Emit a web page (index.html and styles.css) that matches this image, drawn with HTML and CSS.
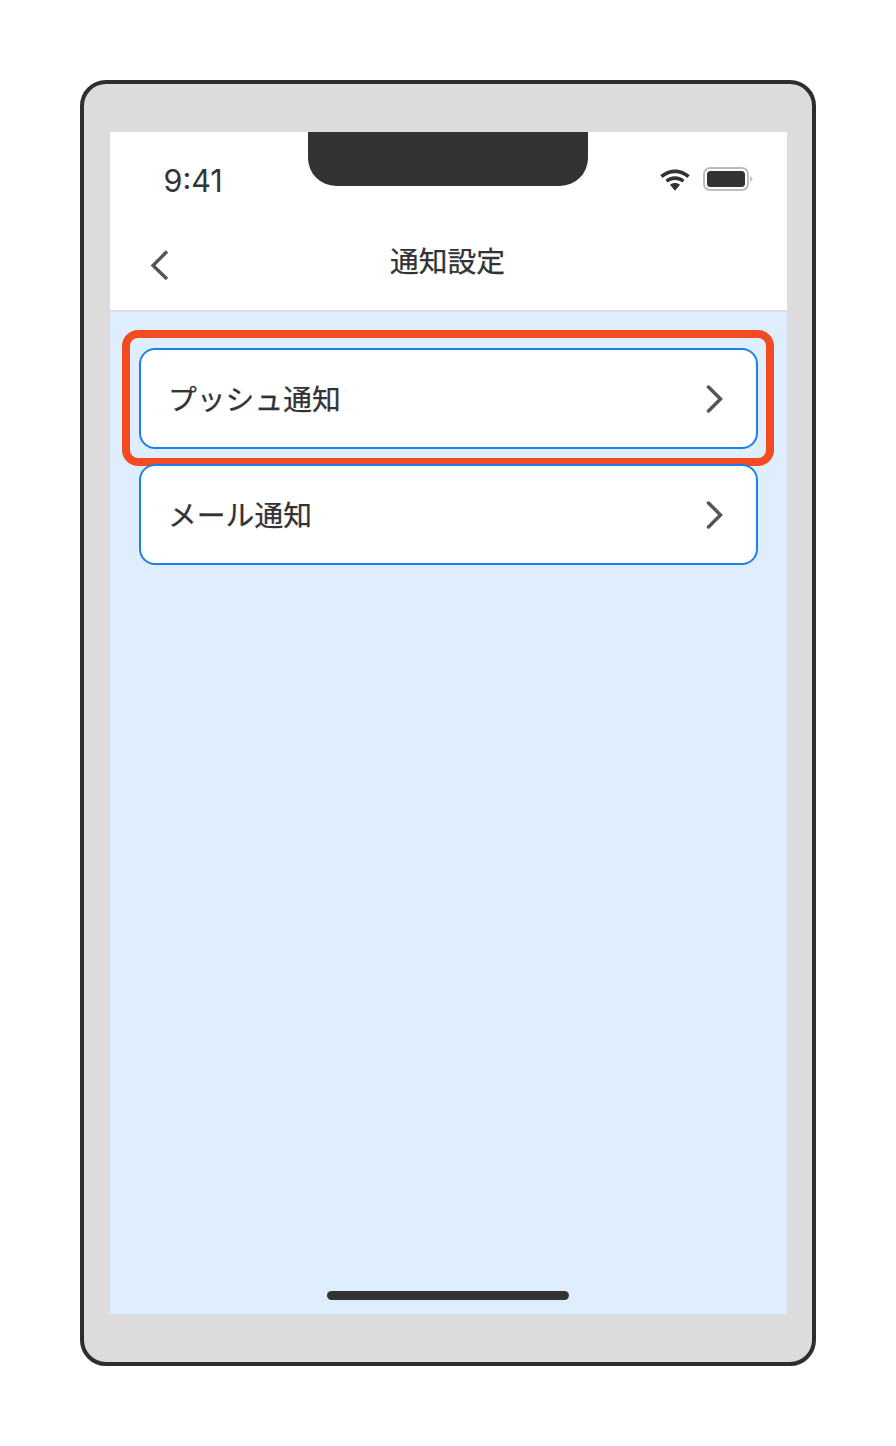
FILE: index.html
```html
<!DOCTYPE html>
<html lang="ja">
<head>
<meta charset="utf-8">
<title>通知設定</title>
<link rel="stylesheet" href="styles.css">
</head>
<body>
<div class="phone">
  <div class="screen">
    <div class="notch"></div>
    <div class="status">
      <span class="time">9:41</span>
      <div class="status-icons">
        <svg class="wifi" width="32" height="24" viewBox="0 0 32 24"><path fill="#333" d="M16 1.5C10 1.5 5.4 3.8 1.3 7.3L3.6 10C7.2 7 11.2 5.2 16 5.2S24.8 7 28.4 10L30.7 7.3C26.6 3.8 22 1.5 16 1.5ZM16 8.3C12.2 8.3 9.1 9.6 6.4 11.9L8.7 14.6C10.7 13 13 12 16 12S21.3 13 23.3 14.6L25.600 11.900C22.900 9.600 19.800 8.300 16 8.300ZM16 15C14.100 15 12.500 15.600 11 16.800L16 22.800 21 16.800C19.500 15.600 17.900 15 16 15Z"/></svg>
        <svg class="battery" width="50" height="26" viewBox="0 0 50 26"><rect x="1" y="1" width="44" height="22" rx="6" fill="#fff" stroke="#bdbdbd" stroke-width="2"/><rect x="4" y="4" width="38" height="16" rx="3.500" fill="#333"/><path fill="#c4c4c4" d="M47 9.500c1.500.3 2.500 1.200 2.500 2.500s-1 2.200-2.500 2.500Z"/></svg>
      </div>
    </div>
    <header class="nav">
      <svg class="back" width="22" height="32" viewBox="0 0 22 32"><path d="M18 2.500 4 16.500 18 30" fill="none" stroke="#555" stroke-width="3.400"/></svg>
      <h1 class="title">通知設定</h1>
    </header>
    <main class="content">
      <a class="row">
        <span class="row-label">プッシュ通知</span>
        <svg class="chev" width="20" height="28" viewBox="0 0 20 28"><path d="M3.500 2 15.500 14 3.500 26" fill="none" stroke="#555" stroke-width="3.500" stroke-linecap="round"/></svg>
        <span class="highlight"></span>
      </a>
      <a class="row">
        <span class="row-label">メール通知</span>
        <svg class="chev" width="20" height="28" viewBox="0 0 20 28"><path d="M3.500 2 15.500 14 3.500 26" fill="none" stroke="#555" stroke-width="3.500" stroke-linecap="round"/></svg>
      </a>
      <div class="home-bar"></div>
    </main>
  </div>
</div>
</body>
</html>
```
FILE: styles.css
```css
* { box-sizing: border-box; }
html, body { margin: 0; padding: 0; background: #fff; }
body {
  height: 1446px;
  padding: 80px 80px 0;
  font-family: "Noto Sans CJK JP", "Noto Sans", sans-serif;
  color: #333;
}
.phone {
  width: 736px;
  height: 1286px;
  padding: 48px 25px 48px 26px;
  background: #dcdcdc;
  border: 4px solid #2e2e2e;
  border-radius: 26px;
}
.screen {
  position: relative;
  display: flex;
  flex-direction: column;
  height: 1182px;
  background: #fff;
}
.notch {
  position: absolute;
  top: 0;
  left: 198px;
  width: 280px;
  height: 54px;
  background: #333;
  border-radius: 0 0 28px 28px;
}
.status {
  display: flex;
  justify-content: space-between;
  align-items: center;
  height: 90px;
  padding: 8px 34px 0 53.500px;
}
.time {
  font-family: Inter, sans-serif;
  font-size: 30.500px;
  line-height: 40px;
  color: #333;
}
.status-icons { display: flex; align-items: center; gap: 12px; margin-top: -2px; }
.wifi, .battery { display: block; }
.nav {
  display: flex;
  align-items: center;
  justify-content: center;
  position: relative;
  height: 90px;
  border-bottom: 2px solid #dcdcdc;
}
.back { position: absolute; left: 39px; top: 27px; }
.title {
  margin: 0 2px 12px 0;
  font-size: 28.800px;
  font-weight: 400;
  line-height: 40px;
  color: #333;
  -webkit-text-stroke: 0.25px #333;
}
.content {
  position: relative;
  flex: 1;
  display: flex;
  flex-direction: column;
  gap: 15px;
  padding: 36px 29px 0;
  background: #deeeff;
}
.row {
  position: relative;
  display: flex;
  align-items: center;
  justify-content: space-between;
  height: 101px;
  padding: 0 31px 0 27px;
  background: #fff;
  border: 2px solid #1d80ea;
  border-radius: 16px;
}
.row-label {
  margin-top: -2px;
  font-size: 28.800px;
  font-weight: 400;
  line-height: 40px;
  color: #333;
  -webkit-text-stroke: 0.25px #333;
}
.chev { display: block; }
.highlight {
  position: absolute;
  top: -20px;
  left: -19px;
  right: -18px;
  bottom: -19px;
  border: 8px solid #f34b21;
  border-radius: 16px;
}
.home-bar {
  position: absolute;
  left: 217px;
  bottom: 14px;
  width: 242px;
  height: 9px;
  background: #333;
  border-radius: 5px;
}
```
